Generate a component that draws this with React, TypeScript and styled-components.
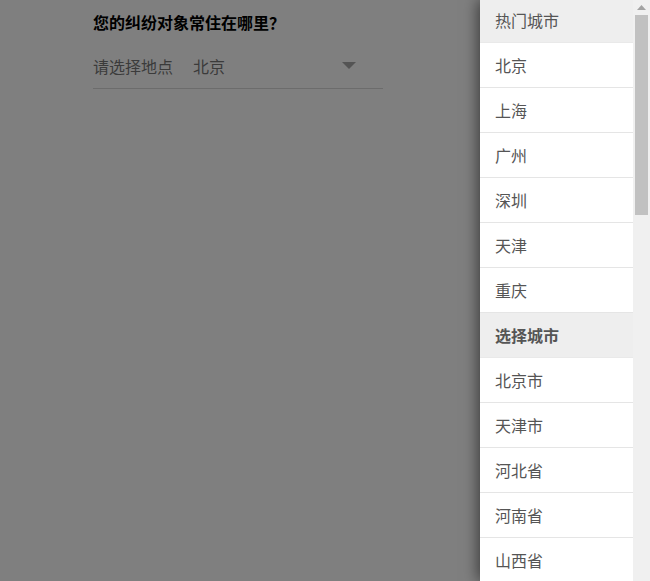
import React from "react";
import styled, { createGlobalStyle } from "styled-components";

const GlobalStyle = createGlobalStyle`
  html, body { margin: 0; padding: 0; background: #fff; }
  body {
    font-family: "Noto Sans CJK SC", "Noto Sans", sans-serif;
    font-size: 16px;
    overflow: hidden;
  }
`;

const Page = styled.div`
  width: 650px;
  height: 581px;
  position: relative;
  overflow: hidden;
`;

const Form = styled.div`
  width: 290px;
  margin-left: 93px;
  padding-top: 10px;
  display: flex;
  flex-direction: column;
`;

const Title = styled.div`
  font-weight: bold;
  color: #000;
  font-size: 16px;
  line-height: 24px;
`;

const SelectRow = styled.div`
  display: flex;
  align-items: center;
  height: 45px;
  margin-top: 9px;
  border-bottom: 1px solid #d9d9d9;
`;

const Label = styled.span`
  color: #777;
  width: 80px;
  margin-right: 20px;
  white-space: nowrap;
`;

const Value = styled.span`
  color: #777;
  flex: 1;
`;

const Caret = styled.span`
  width: 0;
  height: 0;
  border-left: 7px solid transparent;
  border-right: 7px solid transparent;
  border-top: 7px solid #a8a8a8;
  margin-right: 27px;
`;

const Mask = styled.div`
  position: absolute;
  inset: 0;
  background: rgba(0, 0, 0, 0.5);
`;

const Drawer = styled.div`
  position: absolute;
  top: 0;
  right: 0;
  bottom: 0;
  width: 170px;
  display: flex;
  background: #f0f0f0;
  box-shadow: -2px 0 14px rgba(0, 0, 0, 0.55);
`;

const Viewport = styled.div`
  width: 153px;
  height: 100%;
  overflow: hidden;
`;

const List = styled.div`
  display: flex;
  flex-direction: column;
  background: #fff;
  margin-top: -2px;
`;

const Item = styled.div<{ $header?: boolean; $bold?: boolean }>`
  height: 44px;
  line-height: 44px;
  padding-left: 15px;
  color: #555;
  font-size: 16px;
  font-weight: ${(p) => (p.$bold ? "bold" : "normal")};
  background: ${(p) => (p.$header ? "#eeeeee" : "#fff")};
  border-bottom: 1px solid ${(p) => (p.$header ? "#e9e9e9" : "#e5e5e5")};
  white-space: nowrap;
  flex-shrink: 0;
`;

const ScrollTrack = styled.div`
  width: 17px;
  height: 100%;
  background: #f0f0f0;
  display: flex;
  flex-direction: column;
  align-items: center;
`;

const ArrowButton = styled.div`
  width: 17px;
  height: 15px;
  display: flex;
  align-items: center;
  justify-content: center;
  flex-shrink: 0;
`;

const Thumb = styled.div`
  width: 13px;
  height: 200px;
  background: #c1c1c1;
`;

const hot = ["北京", "上海", "广州", "深圳", "天津", "重庆"];
const provinces = [
  "北京市", "天津市", "河北省", "河南省", "山西省", "内蒙古自治区", "辽宁省", "吉林省",
  "黑龙江省", "上海市", "江苏省", "浙江省", "安徽省", "福建省", "江西省", "山东省",
];

export default function App() {
  return (
    <Page>
      <GlobalStyle />
      <Form>
        <Title>您的纠纷对象常住在哪里？</Title>
        <SelectRow>
          <Label>请选择地点</Label>
          <Value>北京</Value>
          <Caret />
        </SelectRow>
      </Form>
      <Mask />
      <Drawer>
        <Viewport>
          <List>
            <Item $header>热门城市</Item>
            {hot.map((c) => (
              <Item key={c}>{c}</Item>
            ))}
            <Item $header $bold>选择城市</Item>
            {provinces.map((c) => (
              <Item key={c}>{c}</Item>
            ))}
          </List>
        </Viewport>
        <ScrollTrack>
          <ArrowButton>
            <svg width="9" height="5" viewBox="0 0 9 5">
              <polygon points="0,5 9,5 4.5,0" fill="#a3a3a3" />
            </svg>
          </ArrowButton>
          <Thumb />
        </ScrollTrack>
      </Drawer>
    </Page>
  );
}
